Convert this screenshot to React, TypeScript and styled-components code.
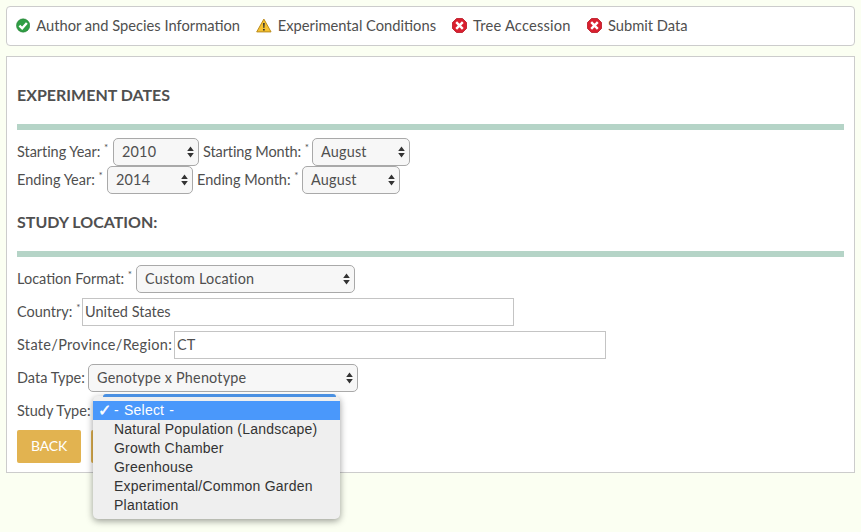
import React from "react";
import styled, { createGlobalStyle } from "styled-components";

const Global = createGlobalStyle`
  html, body { margin: 0; padding: 0; background: #fbfff2; }
  body { font-family: "Lato", "Open Sans", sans-serif; color: #4a4a4a; width: 861px; height: 532px; overflow: hidden; }
  * { box-sizing: border-box; }
`;

const Page = styled.div`
  padding: 6px 6px 0 6px;
  display: flex;
  flex-direction: column;
  gap: 10px;
`;

const StepBar = styled.nav`
  height: 40px;
  background: #fff;
  border: 1px solid #ccc;
  border-radius: 4px;
  display: flex;
  align-items: center;
  padding: 0 9px 2px;
  gap: 16px;
`;

const Step = styled.div<{ $w: number; $ls?: number }>`
  width: ${p => p.$w}px;
  flex: none;
  display: flex;
  align-items: center;
  gap: 6px;
  font-size: 14.7px;
  letter-spacing: ${p => p.$ls ?? 0}px;
  color: #4f4f4f;
  white-space: nowrap;
`;

const Panel = styled.form`
  position: relative;
  height: 417px;
  background: #fff;
  border: 1px solid #ccc;
  padding: 0 10px;
`;

const Heading = styled.h3<{ $top: number }>`
  margin: ${p => p.$top}px 0 0;
  font-size: 16px;
  line-height: 20px;
  font-weight: 700;
  color: #505050;
`;

const Rule = styled.hr<{ $top: number }>`
  margin: ${p => p.$top}px 0 8px;
  border: 0;
  height: 6px;
  background: #b5d4c7;
`;

const Row = styled.div`
  display: flex;
  align-items: center;
  gap: 4px;
  height: 28px;
  margin-bottom: 5px;
`;

const TightRow = styled(Row)`
  margin-bottom: 0;
`;

const Label = styled.label<{ $w: number; $ls?: number }>`
  width: ${p => p.$w}px;
  flex: none;
  padding-bottom: 2px;
  font-size: 14.5px;
  letter-spacing: ${p => p.$ls ?? 0}px;
  white-space: nowrap;
  color: #4f4f4f;
`;

const Req = styled.sup`
  font-size: 10px;
  line-height: 0;
`;

const SelectBox = styled.div<{ $w: number }>`
  width: ${p => p.$w}px;
  height: 28px;
  flex: none;
  display: flex;
  align-items: center;
  justify-content: space-between;
  padding: 0 3px 0 8px;
  background: #f7f7f7;
  border: 1px solid #a9a9a9;
  border-radius: 5px;
  font-size: 14.4px;
  letter-spacing: 0.2px;
  color: #4f4f4f;
`;

const SelectValue = styled.span`
  padding-bottom: 2px;
`;

const TextBox = styled.div`
  width: 432px;
  height: 28px;
  flex: none;
  display: flex;
  align-items: center;
  padding: 0 2px 2px;
  background: #fff;
  border: 1px solid #c4c4c4;
  font-size: 14.5px;
  color: #4f4f4f;
`;

const Buttons = styled.div`
  display: flex;
  gap: 10px;
  margin-top: 3px;
`;

const Button = styled.button`
  width: 64px;
  height: 33px;
  border: 0;
  border-radius: 2px;
  background: #e2b350;
  color: #fff;
  font-family: inherit;
  font-size: 14px;
  letter-spacing: -0.2px;
  padding: 0 0 3px;
`;

const Menu = styled.ul`
  position: absolute;
  left: 86px;
  top: 339px;
  width: 247px;
  height: 123px;
  margin: 0;
  padding: 5px 0 0;
  list-style: none;
  background: #efefef;
  border-radius: 5px;
  box-shadow: 0 2px 7px rgba(0, 0, 0, 0.4);
  font-family: "Liberation Sans", sans-serif;
  font-size: 14px;
  color: #333;
  z-index: 2;
`;

const MenuTop = styled.div`
  position: absolute;
  left: 10px;
  right: 4px;
  top: -2px;
  height: 3px;
  background: #4a90e2;
  border-radius: 3px 3px 0 0;
  z-index: -1;
`;

const Option = styled.li<{ $on?: boolean }>`
  height: 19px;
  line-height: 19px;
  padding-left: 21px;
  position: relative;
  letter-spacing: 0.22px;
  word-spacing: ${p => (p.$on ? "1px" : "0")};
  background: ${p => (p.$on ? "#4a98fb" : "transparent")};
  color: ${p => (p.$on ? "#fff" : "#333")};
`;

const Check = styled.span`
  position: absolute;
  left: 5px;
  top: 0;
  font-family: "DejaVu Sans", sans-serif;
  font-size: 16px;
  -webkit-text-stroke: 0.5px #fff;
`;

const Arrows = () => (
  <svg width="9" height="14" viewBox="0 0 9 14" aria-hidden="true">
    <path d="M4.5 1.5 L7.8 6 H1.2 Z M4.5 12.5 L7.8 8 H1.2 Z" fill="#333" />
  </svg>
);

const OkIcon = () => (
  <svg width="15" height="15" viewBox="0 0 15 15" aria-hidden="true">
    <circle cx="7.5" cy="7.5" r="7" fill="#2f9e44" stroke="#237a33" strokeWidth=".6" />
    <path d="M3.6 7.6 L6.5 10.5 L11.4 4.8" fill="none" stroke="#fff" strokeWidth="2.5" />
  </svg>
);

const WarnIcon = () => (
  <svg width="16" height="15" viewBox="0 0 16 15" aria-hidden="true">
    <path d="M8 1 L15.3 14 H.7 Z" fill="#f6c231" stroke="#b9891a" strokeWidth="1" strokeLinejoin="round" />
    <path d="M7.1 5 H8.9 L8.5 10 H7.5 Z M7.1 11 H8.9 V12.7 H7.1 Z" fill="#333" />
  </svg>
);

const ErrIcon = () => (
  <svg width="15" height="15" viewBox="0 0 15 15" aria-hidden="true">
    <path d="M4.5 .5 H10.5 L14.5 4.5 V10.5 L10.5 14.5 H4.5 L.5 10.5 V4.5 Z" fill="#d9202f" stroke="#b81522" strokeWidth=".8" strokeLinejoin="round" />
    <path d="M4.2 4.2 L10.8 10.8 M10.8 4.2 L4.2 10.8" stroke="#fff" strokeWidth="2.4" />
  </svg>
);

const Sel = ({ w, v }: { w: number; v: string }) => (
  <SelectBox $w={w}>
    <SelectValue>{v}</SelectValue>
    <Arrows />
  </SelectBox>
);

export default function App() {
  return (
    <>
      <Global />
      <Page>
        <StepBar>
          <Step $w={224}><OkIcon />Author and Species Information</Step>
          <Step $w={180}><WarnIcon />Experimental Conditions</Step>
          <Step $w={119} $ls={0.2}><ErrIcon />Tree Accession</Step>
          <Step $w={101}><ErrIcon />Submit Data</Step>
        </StepBar>
        <Panel>
          <Heading $top={28}>EXPERIMENT DATES</Heading>
          <Rule $top={19} />
          <TightRow>
            <Label $w={92} $ls={-0.05}>Starting Year: <Req>*</Req></Label>
            <Sel w={86} v="2010" />
            <Label $w={105} $ls={-0.1}>Starting Month: <Req>*</Req></Label>
            <Sel w={98} v="August" />
          </TightRow>
          <TightRow>
            <Label $w={86}>Ending Year: <Req>*</Req></Label>
            <Sel w={86} v="2014" />
            <Label $w={101}>Ending Month: <Req>*</Req></Label>
            <Sel w={98} v="August" />
          </TightRow>
          <Heading $top={18}>STUDY LOCATION:</Heading>
          <Rule $top={19} />
          <Row>
            <Label $w={115}>Location Format: <Req>*</Req></Label>
            <Sel w={219} v="Custom Location" />
          </Row>
          <Row>
            <Label $w={61}>Country: <Req>*</Req></Label>
            <TextBox>United States</TextBox>
          </Row>
          <Row>
            <Label $w={153} $ls={0.32}>State/Province/Region:</Label>
            <TextBox>CT</TextBox>
          </Row>
          <Row>
            <Label $w={67}>Data Type:</Label>
            <Sel w={270} v="Genotype x Phenotype" />
          </Row>
          <Row>
            <Label $w={75}>Study Type:</Label>
          </Row>
          <Buttons>
            <Button type="button">BACK</Button>
            <Button type="button" aria-label="Next" />
          </Buttons>
          <Menu>
            <MenuTop />
            <Option $on><Check>✓</Check>- Select -</Option>
            <Option>Natural Population (Landscape)</Option>
            <Option>Growth Chamber</Option>
            <Option>Greenhouse</Option>
            <Option>Experimental/Common Garden</Option>
            <Option>Plantation</Option>
          </Menu>
        </Panel>
      </Page>
    </>
  );
}
